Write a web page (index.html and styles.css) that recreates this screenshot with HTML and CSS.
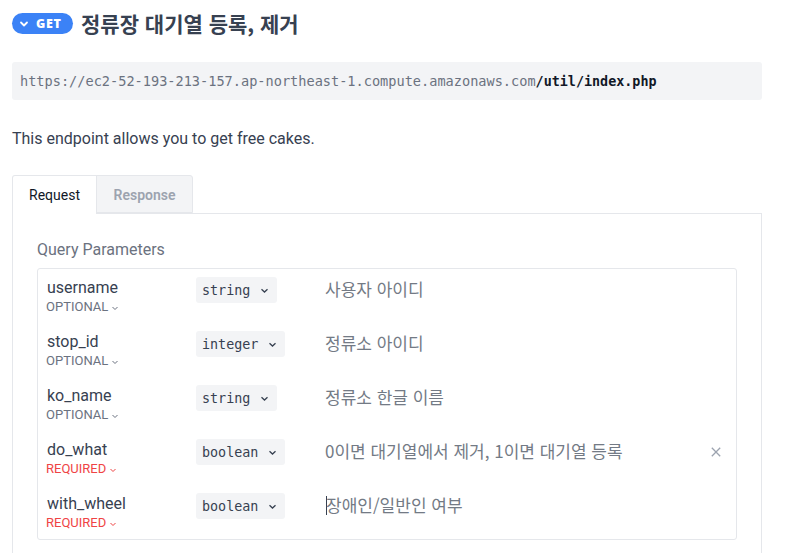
FILE: index.html
```html
<!DOCTYPE html>
<html lang="ko">
<head>
<meta charset="utf-8">
<title>정류장 대기열 등록, 제거</title>
<link rel="stylesheet" href="styles.css">
</head>
<body>
<div class="page">
  <div class="heading">
    <span class="badge">
      <svg class="badge-chev" width="10" height="10" viewBox="0 0 10 10"><path d="M2 3.5 L5 6.5 L8 3.5" fill="none" stroke="#fff" stroke-width="1.8" stroke-linecap="round" stroke-linejoin="round"/></svg>
      <span class="badge-text">GET</span>
    </span>
    <h1 class="title">정류장 대기열 등록, 제거</h1>
  </div>

  <div class="url"><span class="url-host">https://ec2-52-193-213-157.ap-northeast-1.compute.amazonaws.com</span><span class="url-path">/util/index.php</span></div>

  <p class="desc">This endpoint allows you to get free cakes.</p>

  <div class="tabs">
    <div class="tab tab-active">Request</div>
    <div class="tab tab-inactive">Response</div>
  </div>
  <div class="panel">
    <div class="section-title">Query Parameters</div>
    <div class="params">
      <div class="row">
        <div class="col-name">
          <div class="pname">username</div>
          <div class="pflag optional">OPTIONAL <svg class="flag-chev" width="8" height="8" viewBox="0 0 8 8"><path d="M1.5 3 L4 5.5 L6.5 3" fill="none" stroke="currentColor" stroke-width="1"/></svg></div>
        </div>
        <div class="col-type"><span class="select">string<svg class="sel-chev" width="9" height="9" viewBox="0 0 9 9"><path d="M1.5 3.2 L4.5 6 L7.5 3.2" fill="none" stroke="#374151" stroke-width="1.3"/></svg></span></div>
        <div class="col-desc">사용자 아이디</div>
      </div>
      <div class="row">
        <div class="col-name">
          <div class="pname">stop_id</div>
          <div class="pflag optional">OPTIONAL <svg class="flag-chev" width="8" height="8" viewBox="0 0 8 8"><path d="M1.5 3 L4 5.5 L6.5 3" fill="none" stroke="currentColor" stroke-width="1"/></svg></div>
        </div>
        <div class="col-type"><span class="select">integer<svg class="sel-chev" width="9" height="9" viewBox="0 0 9 9"><path d="M1.5 3.2 L4.5 6 L7.5 3.2" fill="none" stroke="#374151" stroke-width="1.3"/></svg></span></div>
        <div class="col-desc">정류소 아이디</div>
      </div>
      <div class="row">
        <div class="col-name">
          <div class="pname">ko_name</div>
          <div class="pflag optional">OPTIONAL <svg class="flag-chev" width="8" height="8" viewBox="0 0 8 8"><path d="M1.5 3 L4 5.5 L6.5 3" fill="none" stroke="currentColor" stroke-width="1"/></svg></div>
        </div>
        <div class="col-type"><span class="select">string<svg class="sel-chev" width="9" height="9" viewBox="0 0 9 9"><path d="M1.5 3.2 L4.5 6 L7.5 3.2" fill="none" stroke="#374151" stroke-width="1.3"/></svg></span></div>
        <div class="col-desc">정류소 한글 이름</div>
      </div>
      <div class="row">
        <div class="col-name">
          <div class="pname">do_what</div>
          <div class="pflag required">REQUIRED <svg class="flag-chev" width="8" height="8" viewBox="0 0 8 8"><path d="M1.5 3 L4 5.5 L6.5 3" fill="none" stroke="currentColor" stroke-width="1"/></svg></div>
        </div>
        <div class="col-type"><span class="select">boolean<svg class="sel-chev" width="9" height="9" viewBox="0 0 9 9"><path d="M1.5 3.2 L4.5 6 L7.5 3.2" fill="none" stroke="#374151" stroke-width="1.3"/></svg></span></div>
        <div class="col-desc">0이면 대기열에서 제거, 1이면 대기열 등록</div>
        <div class="col-close"><svg width="10" height="10" viewBox="0 0 10 10"><path d="M0.8 0.8 L9.2 9.2 M9.2 0.8 L0.8 9.2" stroke="#9ca3af" stroke-width="1.3"/></svg></div>
      </div>
      <div class="row">
        <div class="col-name">
          <div class="pname">with_wheel</div>
          <div class="pflag required">REQUIRED <svg class="flag-chev" width="8" height="8" viewBox="0 0 8 8"><path d="M1.5 3 L4 5.5 L6.5 3" fill="none" stroke="currentColor" stroke-width="1"/></svg></div>
        </div>
        <div class="col-type"><span class="select">boolean<svg class="sel-chev" width="9" height="9" viewBox="0 0 9 9"><path d="M1.5 3.2 L4.5 6 L7.5 3.2" fill="none" stroke="#374151" stroke-width="1.3"/></svg></span></div>
        <div class="col-desc"><span class="caret"></span>장애인/일반인 여부</div>
      </div>
    </div>
  </div>
</div>
</body>
</html>
```

FILE: styles.css
```css
html, body {
  margin: 0;
  padding: 0;
  background: #ffffff;
}
body {
  font-family: Roboto, "Noto Sans CJK KR", sans-serif;
  color: #374151;
  overflow: hidden;
}
.page {
  width: 750px;
  padding: 0 0 0 12px;
}
.heading {
  display: flex;
  align-items: center;
  height: 21px;
  margin-top: 13px;
}
.badge {
  display: inline-flex;
  align-items: center;
  flex-shrink: 0;
  width: 61px;
  height: 21px;
  box-sizing: border-box;
  padding-left: 7px;
  border-radius: 11px;
  background: #3b82f6;
  color: #ffffff;
}
.badge-chev {
  display: block;
  margin-right: 7px;
}
.badge-text {
  font-family: "Open Sans", Roboto, sans-serif;
  font-weight: 800;
  font-size: 12.5px;
  letter-spacing: 0.7px;
  line-height: 21px;
}
.title {
  margin: 0 0 0 8px;
  font-family: "Noto Sans CJK KR", sans-serif;
  font-size: 21px;
  font-weight: 700;
  color: #374151;
  line-height: 21px;
  white-space: nowrap;
}
.url {
  margin-top: 28px;
  height: 38px;
  box-sizing: border-box;
  padding-left: 8px;
  background: #f3f4f6;
  border-radius: 3px;
  font-family: "DejaVu Sans Mono", monospace;
  font-size: 13.6px;
  line-height: 38px;
  white-space: nowrap;
}
.url-host {
  color: #6b7280;
}
.url-path {
  color: #111827;
  font-weight: 700;
  font-size: 13.4px;
}
.desc {
  margin: 27px 0 0 0;
  font-size: 16px;
  line-height: 24px;
  color: #374151;
}
.tabs {
  display: flex;
  margin-top: 24px;
}
.tab {
  height: 38px;
  box-sizing: border-box;
  font-size: 14px;
  line-height: 38px;
  text-align: center;
  border: 1px solid #e5e7eb;
  border-bottom: none;
}
.tab-active {
  width: 85px;
  background: #ffffff;
  color: #111827;
  border-radius: 3px 0 0 0;
  position: relative;
  margin-bottom: -1px;
  height: 39px;
}
.tab-inactive {
  width: 97px;
  margin-left: -1px;
  background: #f3f4f6;
  color: #9ca3af;
  font-weight: 600;
  border-radius: 0 3px 0 0;
  border-bottom: 1px solid #e5e7eb;
}
.panel {
  border: 1px solid #e5e7eb;
  border-bottom: none;
  padding: 24px 24px 13px 24px;
}
.section-title {
  font-size: 16px;
  line-height: 24px;
  color: #6b7280;
  margin-bottom: 6px;
}
.params {
  border: 1px solid #e5e7eb;
  border-radius: 3px;
}
.row {
  display: flex;
  height: 54px;
  box-sizing: border-box;
  padding: 0 0 0 9px;
}
.col-name {
  width: 149px;
  padding-top: 9px;
}
.pname {
  font-size: 16px;
  line-height: 20px;
  color: #374151;
}
.pflag {
  font-size: 13px;
  line-height: 17px;
  margin-left: -1px;
  display: flex;
  align-items: center;
}
.flag-chev {
  margin-left: 3px;
  margin-top: 2px;
}
.optional {
  color: #6b7280;
}
.required {
  color: #ef4444;
}
.col-type {
  width: 129px;
  padding-top: 8px;
}
.select {
  display: inline-flex;
  align-items: center;
  height: 26px;
  box-sizing: border-box;
  padding: 0 8px 0 6px;
  background: #f3f4f6;
  border-radius: 3px;
  font-family: "DejaVu Sans Mono", monospace;
  font-size: 13.4px;
  color: #374151;
}
.sel-chev {
  margin-left: 10px;
}
.col-desc {
  flex: 1;
  padding-top: 8px;
  font-family: "Noto Sans CJK KR", sans-serif;
  font-size: 17px;
  line-height: 24px;
  color: #737a85;
}
.caret {
  display: inline-block;
  width: 1px;
  height: 19px;
  background: #374151;
  vertical-align: -3px;
  margin-right: -1px;
  margin-left: 1px;
}
.col-close {
  width: 25px;
  padding-top: 11px;
}
```
